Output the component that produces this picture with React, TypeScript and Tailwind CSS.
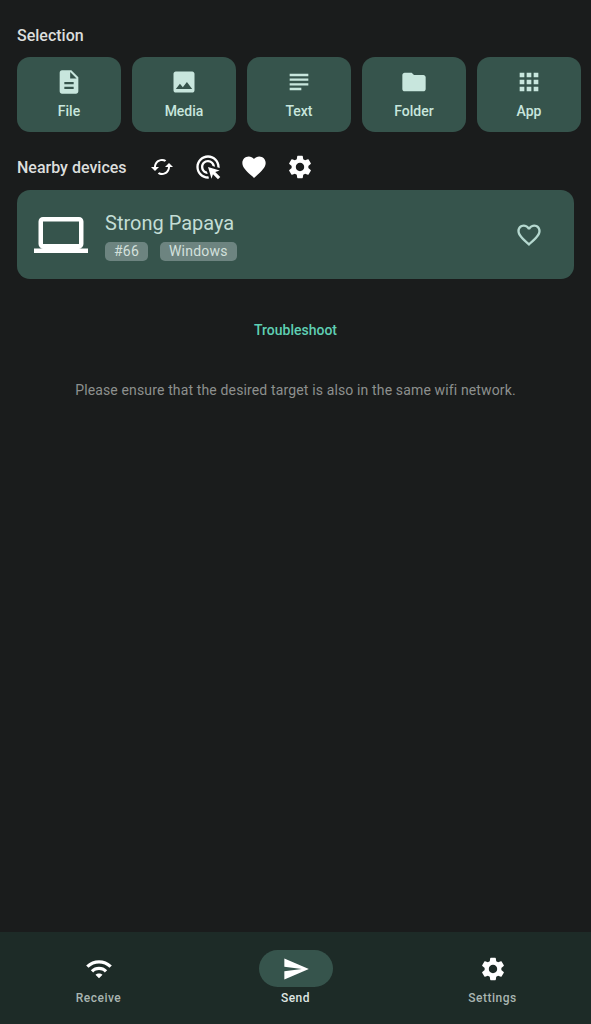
const PATHS = {
  file: "M14 2H6c-1.1 0-1.99.9-1.99 2L4 20c0 1.1.89 2 1.99 2H18c1.1 0 2-.9 2-2V8l-6-6zm2 16H8v-2h8v2zm0-4H8v-2h8v2zm-3-5V3.5L18.5 9H13z",
  media: "M21 19V5c0-1.1-.9-2-2-2H5c-1.1 0-2 .9-2 2v14c0 1.1.9 2 2 2h14c1.1 0 2-.9 2-2zM8.5 13.5l2.5 3.01L14.5 12l4.5 6H5l3.5-4.5z",
  text: "M14 17H4v2h10v-2zm6-8H4v2h16V9zM4 15h16v-2H4v2zM4 5v2h16V5H4z",
  folder: "M10 4H4c-1.1 0-1.99.9-1.99 2L2 18c0 1.1.9 2 2 2h16c1.1 0 2-.9 2-2V8c0-1.1-.9-2-2-2h-8l-2-2z",
  apps: "M4 8h4V4H4v4zm6 12h4v-4h-4v4zm-6 0h4v-4H4v4zm0-6h4v-4H4v4zm6 0h4v-4h-4v4zm6-10v4h4V4h-4zm-6 4h4V4h-4v4zm6 6h4v-4h-4v4zm0 6h4v-4h-4v4z",
  cached: "M19 8l-4 4h3c0 3.31-2.69 6-6 6-1.01 0-1.97-.25-2.8-.7l-1.46 1.46C8.97 19.54 10.43 20 12 20c4.42 0 8-3.58 8-8h3l-4-4zM6 12c0-3.31 2.69-6 6-6 1.01 0 1.97.25 2.8.7l1.46-1.46C15.03 4.46 13.57 4 12 4c-4.42 0-8 3.58-8 8H1l4 4 4-4H6z",
  target: "M11.71 17.99C8.53 17.84 6 15.22 6 12c0-3.31 2.69-6 6-6 3.22 0 5.84 2.53 5.99 5.71l-2.1-.63C15.48 9.31 13.89 8 12 8c-2.21 0-4 1.79-4 4 0 1.89 1.31 3.48 3.08 3.89l.63 2.1zM22 12c0 .3-.01.6-.04.9l-1.97-.59c.01-.1.01-.21.01-.31 0-4.42-3.58-8-8-8s-8 3.58-8 8 3.58 8 8 8c.1 0 .21 0 .31-.01l.59 1.97c-.3.03-.6.04-.9.04-5.52 0-10-4.48-10-10S6.48 2 12 2s10 4.48 10 10zm-3.77 4.26L22 15l-10-3 3 10 1.26-3.77 4.27 4.27 1.98-1.98-4.28-4.26z",
  heart: "M12 21.35l-1.45-1.32C5.4 15.36 2 12.28 2 8.5 2 5.42 4.42 3 7.5 3c1.74 0 3.41.81 4.5 2.09C13.09 3.81 14.76 3 16.5 3 19.58 3 22 5.42 22 8.5c0 3.78-3.4 6.86-8.55 11.54L12 21.35z",
  heartOutline: "M16.5 3c-1.74 0-3.41.81-4.5 2.09C10.91 3.81 9.24 3 7.5 3 4.42 3 2 5.42 2 8.5c0 3.78 3.4 6.86 8.55 11.54L12 21.35l1.45-1.32C18.6 15.36 22 12.28 22 8.5 22 5.42 19.58 3 16.5 3zm-4.4 15.55l-.1.1-.1-.1C7.14 14.24 4 11.39 4 8.5 4 6.5 5.5 5 7.5 5c1.54 0 3.04.99 3.57 2.36h1.87C13.46 5.99 14.96 5 16.5 5c2 0 3.5 1.5 3.5 3.5 0 2.89-3.14 5.74-7.9 10.05z",
  settings: "M19.14,12.94c0.04-0.3,0.06-0.61,0.06-0.94c0-0.32-0.02-0.64-0.07-0.94l2.03-1.58c0.18-0.14,0.23-0.41,0.12-0.61 l-1.92-3.32c-0.12-0.22-0.37-0.29-0.59-0.22l-2.39,0.96c-0.5-0.38-1.03-0.7-1.62-0.94L14.4,2.81c-0.04-0.24-0.24-0.41-0.48-0.41 h-3.84c-0.24,0-0.43,0.17-0.47,0.41L9.25,5.35C8.66,5.59,8.12,5.92,7.63,6.29L5.24,5.33c-0.22-0.08-0.47,0-0.59,0.22L2.74,8.87 C2.62,9.08,2.66,9.34,2.86,9.48l2.03,1.58C4.84,11.36,4.8,11.69,4.8,12s0.02,0.64,0.07,0.94l-2.03,1.58 c-0.18,0.14-0.23,0.41-0.12,0.61l1.92,3.32c0.12,0.22,0.37,0.29,0.59,0.22l2.39-0.96c0.5,0.38,1.03,0.7,1.62,0.94l0.36,2.54 c0.05,0.24,0.24,0.41,0.48,0.41h3.84c0.24,0,0.44-0.17,0.47-0.41l0.36-2.54c0.59-0.24,1.13-0.56,1.62-0.94l2.39,0.96 c0.22,0.08,0.47,0,0.59-0.22l1.92-3.32c0.12-0.22,0.07-0.47-0.12-0.61L19.14,12.94z M12,15.6c-1.98,0-3.6-1.62-3.6-3.6 s1.62-3.6,3.6-3.6s3.6,1.62,3.6,3.6S13.98,15.6,12,15.6z",
  laptop: "M20 18c1.1 0 1.99-.9 1.99-2L22 6c0-1.1-.9-2-2-2H4c-1.1 0-2 .9-2 2v10c0 1.1.9 2 2 2H0v2h24v-2h-4zM4 6h16v10H4V6z",
  wifi: "M1 9l2 2c4.97-4.97 13.03-4.97 18 0l2-2C16.93 2.93 7.08 2.93 1 9zm8 8l3 3 3-3c-1.65-1.66-4.34-1.66-6 0zm-4-4l2 2c2.76-2.76 7.24-2.76 10 0l2-2C15.14 9.14 8.87 9.14 5 13z",
  send: "M2.01 21L23 12 2.01 3 2 10l15 2-15 2z",
};

function Icon({ d, className }: { d: string; className: string }) {
  return (
    <svg viewBox="0 0 24 24" fill="currentColor" aria-hidden="true" className={className}>
      <path d={d} />
    </svg>
  );
}

const SELECTION = [
  { label: "File", icon: PATHS.file },
  { label: "Media", icon: PATHS.media },
  { label: "Text", icon: PATHS.text },
  { label: "Folder", icon: PATHS.folder },
  { label: "App", icon: PATHS.apps },
];

export default function App() {
  return (
    <div className="flex h-[1024px] w-full flex-col overflow-hidden bg-[#1a1c1c] font-['Roboto',sans-serif]">
      <main className="flex-1 pl-[17px] pr-[10px] pt-[27px]">
        {/* Selection */}
        <h2 className="text-[16px] font-medium leading-[18px] text-[#dcdedc]">Selection</h2>
        <div className="mt-[12px] flex gap-[11px]">
          {SELECTION.map((item) => (
            <button
              key={item.label}
              type="button"
              className="flex h-[75px] w-[104px] flex-col items-center rounded-[13px] bg-[#36544c] pt-[11px] text-[#c8e6dd]"
            >
              <Icon d={item.icon} className="h-[28px] w-[28px]" />
              <span className="mt-[6px] text-[14px] font-medium leading-[18px]">{item.label}</span>
            </button>
          ))}
        </div>

        {/* Nearby devices */}
        <div className="mt-[21px] flex h-[28px] items-center">
          <h2 className="w-[131px] pt-[1px] text-[16px] font-medium text-[#dcdedc]">Nearby devices</h2>
          <div className="flex items-center gap-[18px] text-white">
            <Icon d={PATHS.cached} className="mx-[2px] h-[24px] w-[24px]" />
            <Icon d={PATHS.target} className="h-[28px] w-[28px]" />
            <Icon d={PATHS.heart} className="h-[28px] w-[28px]" />
            <Icon d={PATHS.settings} className="h-[28px] w-[28px]" />
          </div>
        </div>

        <div className="mt-[9px] flex h-[89px] w-[557px] items-center rounded-[13px] bg-[#36544c] pl-[17px] pr-[31px]">
          <Icon d={PATHS.laptop} className="h-[54px] w-[54px] text-white" />
          <div className="ml-[17px] flex-1 pt-[2px]">
            <div className="text-[20px] leading-[24px] text-[#c3ddd5]">Strong Papaya</div>
            <div className="mt-[7px] flex gap-[12px]">
              <span className="rounded-[5px] bg-[#6d8480] px-[9px] text-[14px] leading-[19px] tracking-[0.2px] text-[#d3e0dc]">#66</span>
              <span className="rounded-[5px] bg-[#6d8480] px-[9px] text-[14px] leading-[19px] tracking-[0.2px] text-[#d3e0dc]">Windows</span>
            </div>
          </div>
          <Icon d={PATHS.heartOutline} className="h-[28px] w-[28px] text-[#b5d8cf]" />
        </div>

        {/* Troubleshoot */}
        <div className="mr-[7px] mt-[42px] text-center text-[14px] font-medium leading-[18px] text-[#5fcfb3]">
          Troubleshoot
        </div>
        <p className="mr-[7px] mt-[42px] text-center text-[14px] leading-[18px] tracking-[0.14px] text-[#8d908e]">
          Please ensure that the desired target is also in the same wifi network.
        </p>
      </main>

      {/* Bottom navigation */}
      <nav className="grid h-[92px] grid-cols-3 bg-[#1d2b27]">
        <NavItem label="Receive" icon={PATHS.wifi} />
        <NavItem label="Send" icon={PATHS.send} active />
        <NavItem label="Settings" icon={PATHS.settings} />
      </nav>
    </div>
  );
}

function NavItem({ label, icon, active }: { label: string; icon: string; active?: boolean }) {
  return (
    <div className="flex flex-col items-center pt-[18px]">
      <div className={`flex h-[37px] w-[74px] items-center justify-center rounded-full ${active ? "bg-[#36544c]" : ""}`}>
        <Icon d={icon} className="h-[28px] w-[28px] text-white" />
      </div>
      <span className={`mt-[3px] text-[12px] font-medium leading-[16px] tracking-[0.5px] ${active ? "text-[#dfe5e2]" : "text-[#a9b5b1]"}`}>
        {label}
      </span>
    </div>
  );
}
